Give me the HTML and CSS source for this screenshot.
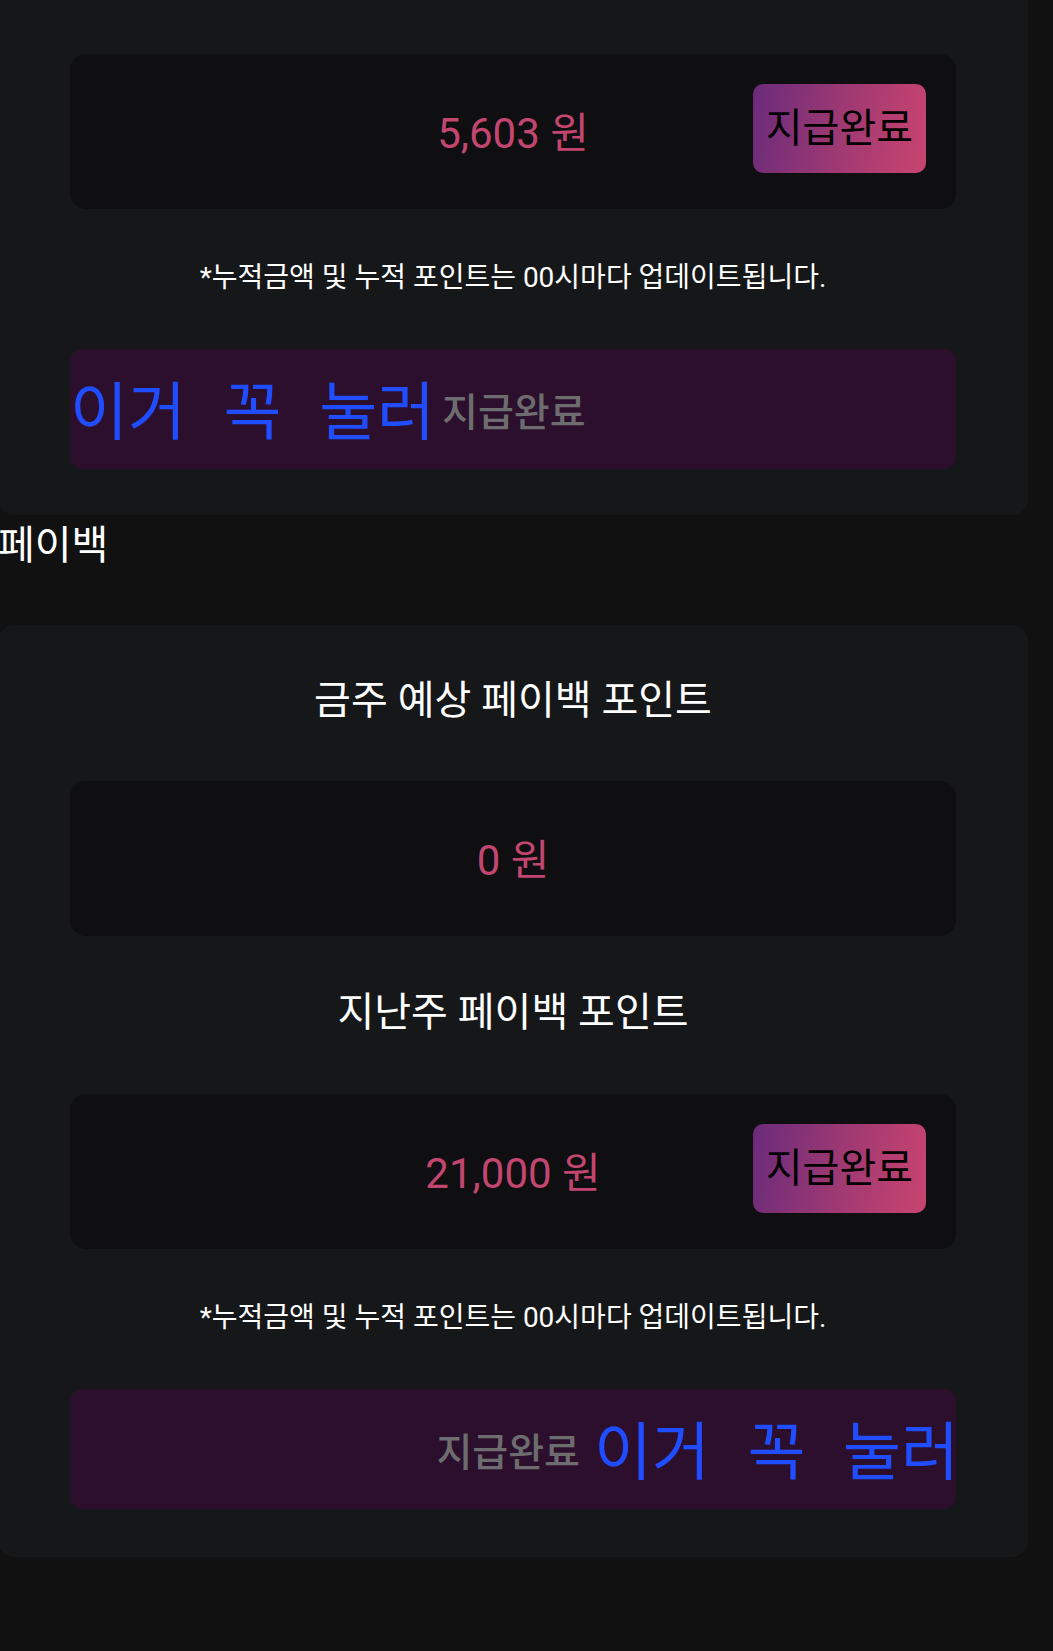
FILE: index.html
```html
<!DOCTYPE html>
<html lang="ko">
<head>
<meta charset="utf-8">
<title>페이백</title>
<link rel="stylesheet" href="styles.css">
</head>
<body>
<main class="page">
  <section class="card card-cut">
    <div class="amount-box">
      <span class="amount">5,603 원</span>
      <button class="paid-btn" type="button">지급완료</button>
    </div>
    <p class="note">*누적금액 및 누적 포인트는 00시마다 업데이트됩니다.</p>
    <div class="action-box">
      <span class="press">이거 꼭 눌러</span>
      <span class="paid-label">지급완료</span>
    </div>
  </section>

  <h2 class="section-label">페이백</h2>

  <section class="card">
    <h3 class="card-title">금주 예상 페이백 포인트</h3>
    <div class="amount-box">
      <span class="amount">0 원</span>
    </div>
    <h3 class="card-title">지난주 페이백 포인트</h3>
    <div class="amount-box">
      <span class="amount">21,000 원</span>
      <button class="paid-btn" type="button">지급완료</button>
    </div>
    <p class="note">*누적금액 및 누적 포인트는 00시마다 업데이트됩니다.</p>
    <div class="action-box action-end">
      <span class="paid-label">지급완료</span>
      <span class="press">이거 꼭 눌러</span>
    </div>
  </section>
</main>
</body>
</html>
```

FILE: styles.css
```css
* {
  box-sizing: border-box;
}

html, body {
  margin: 0;
  padding: 0;
  background: #111111;
}

body {
  font-family: Roboto, "Noto Sans CJK KR", sans-serif;
  color: #ffffff;
  min-height: 1651px;
}

.page {
  width: 1030px;
  margin-left: -2px;
  display: flex;
  flex-direction: column;
}

.card {
  background: #161719;
  border-radius: 16px;
  padding: 0 72px 48px 72px;
  display: flex;
  flex-direction: column;
}

.card-cut {
  border-radius: 0 0 16px 16px;
  padding-top: 54px;
  padding-bottom: 46px;
}

.card-title {
  margin: 50px 0 54px;
  font-size: 40px;
  line-height: 52px;
  font-weight: 400;
  text-align: center;
  color: #ffffff;
}

.card-title + .amount-box + .card-title {
  margin-top: 51px;
  margin-bottom: 55px;
}

.amount-box {
  height: 155px;
  background: #0f0f11;
  border-radius: 16px;
  padding: 0 30px;
  display: grid;
  grid-template-columns: 1fr auto 1fr;
  align-items: center;
}

.amount {
  grid-column: 2;
  font-size: 42px;
  line-height: 52px;
  color: #c2466f;
  padding-top: 4px;
}

.paid-btn {
  grid-column: 3;
  justify-self: end;
  margin-bottom: 6px;
  height: 89px;
  padding: 0 13px;
  border: 0;
  border-radius: 10px;
  background: linear-gradient(100deg, #6a2b7b 0%, #a23a72 55%, #c9446f 100%);
  font-family: Roboto, "Noto Sans CJK KR", sans-serif;
  font-size: 40px;
  line-height: 52px;
  color: #000000;
}

.note {
  margin: 50px 0 52px;
  font-size: 28px;
  line-height: 38px;
  text-align: center;
  color: #ffffff;
}

.action-box {
  height: 120px;
  background: #2b0f2d;
  border-radius: 12px;
  padding-top: 8px;
  display: flex;
  align-items: center;
  justify-content: flex-start;
}

.action-end {
  justify-content: flex-end;
}

.press {
  font-size: 63px;
  line-height: 72px;
  color: #1f4dff;
  word-spacing: 22px;
  white-space: nowrap;
}

.action-end .press {
  margin-right: -3px;
}

.paid-label {
  font-size: 39px;
  line-height: 52px;
  font-weight: 500;
  color: #6d6d6f;
  margin: 0 0 0 7px;
}

.action-end .paid-label {
  margin: 0 14px 0 0;
}

.section-label {
  margin: 5px 0 53px;
  font-size: 40px;
  line-height: 52px;
  font-weight: 400;
  color: #ffffff;
}
```
